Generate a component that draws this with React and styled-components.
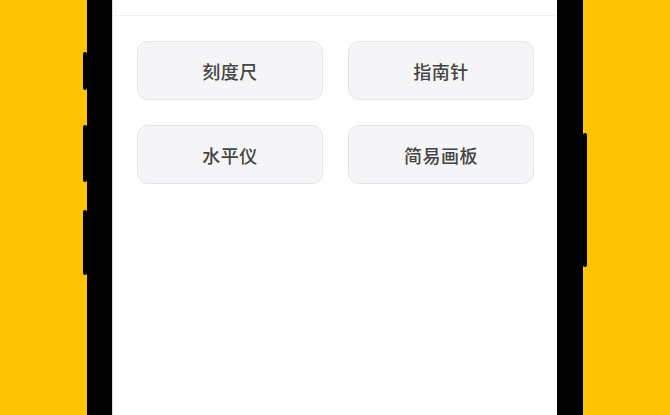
import React from 'react';
import styled, { createGlobalStyle } from 'styled-components';

const tools = ['刻度尺', '指南针', '水平仪', '简易画板'];

// side keys of the phone body, sticking out of the frame
const keys = [
    { side: 'left', top: 52, height: 38 },
    { side: 'left', top: 125, height: 57 },
    { side: 'left', top: 210, height: 65 },
    { side: 'right', top: 133, height: 134 },
];

export default function App() {
    return (
        <>
            <GlobalStyle />
            <Stage>
                <Phone>
                    {keys.map((k, i) => (
                        <SideKey key={i} $side={k.side} style={{ top: k.top, height: k.height }} />
                    ))}
                    <Screen>
                        <Header />
                        <ToolGrid>
                            {tools.map((name) => (
                                <ToolButton key={name}>{name}</ToolButton>
                            ))}
                        </ToolGrid>
                    </Screen>
                </Phone>
            </Stage>
        </>
    );
}

const GlobalStyle = createGlobalStyle`
    html, body {
        margin: 0;
        padding: 0;
        background: #ffc300;
    }
    body {
        font-family: "Noto Sans CJK SC", "Noto Sans", sans-serif;
    }
`;

const Stage = styled.div`
    width: 670px;
    height: 415px;
    overflow: hidden;
    background: #ffc300;
    display: flex;
    justify-content: flex-start;
    padding-left: 87px;
    box-sizing: border-box;
`;

const Phone = styled.div`
    position: relative;
    width: 496px;
    height: 415px;
    background: #000;
    padding: 0 26px 0 25px;
    box-sizing: border-box;
    display: flex;
`;

const SideKey = styled.div`
    position: absolute;
    width: 4px;
    background: #000;
    border-radius: 2px;
    ${(p) => (p.$side === 'left' ? 'left: -4px;' : 'right: -4px;')}
`;

const Screen = styled.div`
    flex: 1;
    background: #fff;
    display: flex;
    flex-direction: column;
    border-left: 1px solid #d9d9d9;
`;

const Header = styled.div`
    height: 15px;
    background: #fff;
    border-bottom: 1px solid #f1f1f3;
`;

const ToolGrid = styled.div`
    display: grid;
    grid-template-columns: 1fr 1fr;
    gap: 25px;
    padding: 25px 23px 0 24px;
`;

const ToolButton = styled.div`
    height: 59px;
    box-sizing: border-box;
    display: flex;
    align-items: center;
    justify-content: center;
    background: #f5f5f7;
    border: 1px solid #e6e6e9;
    border-radius: 11px;
    font-size: 18px;
    font-weight: 500;
    color: #444;
    letter-spacing: 0.5px;
`;
